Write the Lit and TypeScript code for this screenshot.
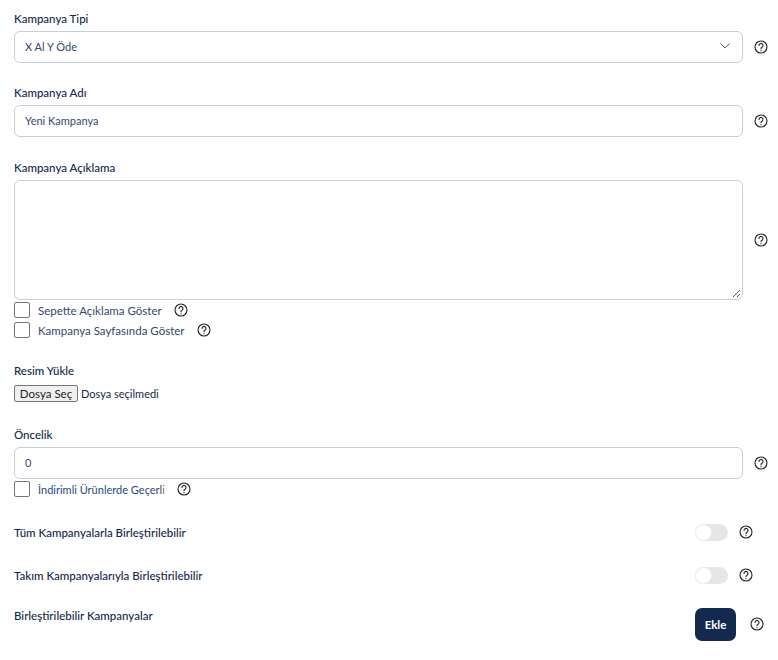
import { LitElement, html, css } from "lit";
import { customElement } from "lit/decorators.js";

const help = html`<svg class="help" width="14" height="14" viewBox="0 0 14 14" fill="none" stroke="#1f2328" stroke-width="1.1" stroke-linecap="round" stroke-linejoin="round" aria-hidden="true"><circle cx="7" cy="7" r="6"/><path d="M5 5.4a2 2 0 1 1 3 1.75c-.7.38-1 .75-1 1.35v.2"/><path d="M7 10.6v.1"/></svg>`;

@customElement("app-root")
export class AppRoot extends LitElement {
  static styles = css`
    :host {
      display: block;
      width: 778px;
      height: 660px;
      overflow: hidden;
      background: #fff;
      font-family: "Lato", "Liberation Sans", sans-serif;
      font-size: 11.5px;
      color: #14284b;
    }
    .form { display: flex; flex-direction: column; padding: 12px 0 0 14px; }
    .label { height: 15px; line-height: 13px; font-weight: 500; color: #13294b; }
    .row { display: flex; align-items: center; }
    .field {
      box-sizing: border-box;
      width: 729px;
      height: 32px;
      border: 1px solid #c3cfdb;
      border-radius: 6px;
      padding: 0 10px 2px;
      display: flex;
      align-items: center;
      justify-content: space-between;
      color: #34486a;
      background: #fff;
      font-size: 11px;
    }
    .chev { margin-right: 2px; }
    .area { height: 120px; position: relative; }
    .grip { position: absolute; right: 1px; bottom: 1px; }
    .help { display: block; flex: none; }
    .row > .help { margin-left: 11px; }
    .check { display: flex; align-items: center; height: 16px; }
    .box {
      box-sizing: border-box;
      width: 16px;
      height: 16px;
      border: 1px solid #6f7680;
      border-radius: 2px;
      background: #fff;
      flex: none;
    }
    .check span { margin-left: 8px; color: #34486a; }
    .check .help { margin-left: 12px; }
    .check .multi { color: #2a4a80; font-size: 11px; }
    .multi b { font-weight: 400; color: #b06a1c; }
    .file { display: flex; align-items: center; margin-top: 6px; height: 17px; color: #13294b; font-size: 11px; }
    .btn {
      box-sizing: border-box;
      width: 64px;
      height: 17px;
      margin-right: 3px;
      background: #efefef;
      border: 1px solid #767676;
      border-radius: 2px;
      display: flex;
      align-items: center;
      justify-content: center;
      color: #1f2328;
      font-size: 11.5px;
    }
    .between { display: flex; align-items: center; width: 739px; height: 16px; }
    .between .text { flex: 1; font-weight: 500; color: #13294b; }
    .toggle {
      width: 33px;
      height: 17px;
      border-radius: 9px;
      background: #e6e6e6;
      position: relative;
      flex: none;
      margin-right: 11px;
    }
    .toggle::before {
      content: "";
      position: absolute;
      left: 0;
      top: 0;
      width: 17px;
      height: 17px;
      box-sizing: border-box;
      border-radius: 50%;
      background: #fff;
      border: 1px solid #ececec;
    }
    .ekle-row { display: flex; align-items: flex-start; width: 750px; }
    .ekle-row .text { flex: 1; font-weight: 500; color: #13294b; }
    .ekle {
      width: 41px;
      height: 33px;
      border-radius: 7px;
      background: #132a4e;
      color: #fff;
      font-weight: 700;
      display: flex;
      align-items: center;
      justify-content: center;
    }
    .ekle-row .help { margin: 9px 0 0 14px; }
  `;

  render() {
    return html`<div class="form">
      <div class="label">Kampanya Tipi</div>
      <div class="row" style="margin-top:4px">
        <div class="field">X Al Y Öde
          <svg class="chev" width="10" height="6" viewBox="0 0 10 6" fill="none" stroke="#4a5c7a" stroke-width="1"><path d="M.5.5 5 5 9.5.5"/></svg>
        </div>${help}
      </div>
      <div class="label" style="margin-top:23px">Kampanya Adı</div>
      <div class="row" style="margin-top:4px"><div class="field">Yeni Kampanya</div>${help}</div>
      <div class="label" style="margin-top:24px">Kampanya Açıklama</div>
      <div class="row" style="margin-top:4px">
        <div class="field area">
          <svg class="grip" width="9" height="9" viewBox="0 0 9 9" stroke="#555" stroke-width="1"><path d="M1 8 8 1M5 8 8 5"/></svg>
        </div>${help}
      </div>
      <div class="check" style="margin-top:2px"><div class="box"></div><span>Sepette Açıklama Göster</span>${help}</div>
      <div class="check" style="margin-top:4px"><div class="box"></div><span>Kampanya Sayfasında Göster</span>${help}</div>
      <div class="label" style="margin-top:26px">Resim Yükle</div>
      <div class="file"><div class="btn">Dosya Seç</div>Dosya seçilmedi</div>
      <div class="label" style="margin-top:26px">Öncelik</div>
      <div class="row" style="margin-top:4px"><div class="field">0</div>${help}</div>
      <div class="check" style="margin-top:2px"><div class="box"></div><span class="multi">İndirimli Ürünlerde Geçerl<b>i</b></span>${help}</div>
      <div class="between" style="margin-top:27px"><div class="text">Tüm Kampanyalarla Birleştirilebilir</div><div class="toggle"></div>${help}</div>
      <div class="between" style="margin-top:27px"><div class="text">Takım Kampanyalarıyla Birleştirilebilir</div><div class="toggle"></div>${help}</div>
      <div class="ekle-row" style="margin-top:25px"><div class="text" style="margin-top:1px">Birleştirilebilir Kampanyalar</div><div class="ekle">Ekle</div>${help}</div>
    </div>`;
  }
}
